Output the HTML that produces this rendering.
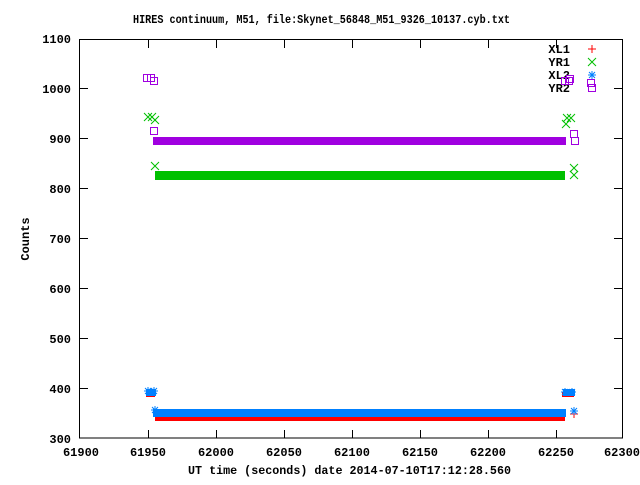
<!DOCTYPE html>
<html><head><meta charset="utf-8"><style>
html,body{margin:0;padding:0;background:#fff;}
svg text{font-family:"Liberation Mono","DejaVu Sans Mono",monospace;font-size:12px;font-weight:bold;fill:#000;}
</style></head><body>
<svg width="640" height="480" viewBox="0 0 640 480" xmlns="http://www.w3.org/2000/svg">
<defs>
<g id="sq"><rect x="-3.5" y="-3.5" width="7" height="7" fill="none" stroke="#a000e0" stroke-width="1"/></g>
<g id="xx"><path d="M-4 -4L4 4M-4 4L4 -4" stroke="#00c000" stroke-width="1"/></g>
<g id="st"><path d="M-4 0H4M0 -4V4M-3 -3L3 3M-3 3L3 -3" stroke="#0080ff" stroke-width="1"/></g>
<g id="pl"><path d="M-4 0H4M0 -4V4" stroke="#ff0000" stroke-width="1"/></g>
</defs>
<text x="133" y="23" textLength="377" lengthAdjust="spacingAndGlyphs">HIRES continuum, M51, file:Skynet_56848_M51_9326_10137.cyb.txt</text>
<rect x="79.5" y="39.5" width="543" height="398.5" fill="none" stroke="#000" stroke-width="1"/>
<g stroke="#000" stroke-width="1">
<path d="M80 88.5h8M80 138.5h8M80 188.5h8M80 238.5h8M80 288.5h8M80 338.5h8M80 388.5h8"/>
<path d="M622 88.5h-8M622 138.5h-8M622 188.5h-8M622 238.5h-8M622 288.5h-8M622 338.5h-8M622 388.5h-8"/>
<path d="M148.5 438v-8M216.5 438v-8M284.5 438v-8M352.5 438v-8M420.5 438v-8M488.5 438v-8M556.5 438v-8"/>
<path d="M148.5 40v8M216.5 40v8M284.5 40v8M352.5 40v8M420.5 40v8M488.5 40v8M556.5 40v8"/>
</g>
<g text-anchor="end">
<text x="71" y="43">1100</text><text x="71" y="93">1000</text><text x="71" y="143">900</text>
<text x="71" y="193">800</text><text x="71" y="243">700</text><text x="71" y="293">600</text>
<text x="71" y="343">500</text><text x="71" y="393">400</text><text x="71" y="443">300</text>
</g>
<g text-anchor="middle">
<text x="81" y="456">61900</text><text x="148" y="456">61950</text><text x="216" y="456">62000</text>
<text x="284" y="456">62050</text><text x="352" y="456">62100</text><text x="420" y="456">62150</text>
<text x="488" y="456">62200</text><text x="556" y="456">62250</text><text x="622" y="456">62300</text>
</g>
<text x="188" y="474" textLength="323" lengthAdjust="spacingAndGlyphs">UT time (seconds) date 2014-07-10T17:12:28.560</text>
<text x="29" y="239" text-anchor="middle" transform="rotate(-90 29 239)">Counts</text>
<g text-anchor="end"><text x="570" y="53">XL1</text><text x="570" y="66">YR1</text><text x="570" y="79">XL2</text><text x="570" y="92">YR2</text></g>
<use href="#pl" x="592" y="49"/><use href="#xx" x="592" y="62"/><use href="#st" x="592" y="75"/><use href="#sq" x="592" y="88"/>
<rect x="153" y="137" width="413" height="8" fill="#a000e0"/>
<use href="#sq" x="147" y="78"/><use href="#sq" x="151" y="78"/><use href="#sq" x="154" y="81"/><use href="#sq" x="154" y="131"/>
<use href="#sq" x="565" y="81"/><use href="#sq" x="569" y="81"/><use href="#sq" x="574" y="134"/><use href="#sq" x="575" y="141"/><use href="#sq" x="570" y="79"/>
<use href="#sq" x="591" y="83"/>
<rect x="155" y="171" width="410" height="9" fill="#00c000"/>
<use href="#xx" x="148" y="117"/><use href="#xx" x="152" y="117"/><use href="#xx" x="155" y="120"/><use href="#xx" x="155" y="166"/>
<use href="#xx" x="567" y="118"/><use href="#xx" x="571" y="118"/><use href="#xx" x="566" y="124"/><use href="#xx" x="574" y="168"/><use href="#xx" x="574" y="175"/>
<rect x="155" y="414" width="410" height="7" fill="#ff0000"/>
<rect x="146" y="392" width="9" height="5" fill="#ff0000"/>
<rect x="562" y="392" width="12" height="5" fill="#ff0000"/>
<use href="#pl" x="574" y="414"/>
<rect x="153" y="409" width="413" height="8" fill="#0080ff"/>
<rect x="146" y="389" width="10" height="7" fill="#0080ff"/>
<rect x="563" y="389" width="12" height="7" fill="#0080ff"/>
<use href="#st" x="148" y="391"/><use href="#st" x="154" y="391"/><use href="#st" x="155" y="410"/>
<use href="#st" x="565" y="392"/><use href="#st" x="572" y="392"/><use href="#st" x="574" y="411"/>
</svg>
</body></html>
